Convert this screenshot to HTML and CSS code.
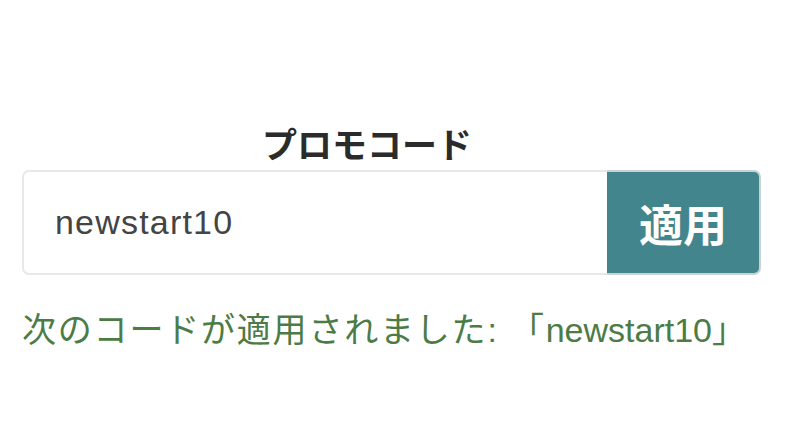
FILE: index.html
```html
<!DOCTYPE html>
<html lang="ja">
<head>
<meta charset="utf-8">
<link rel="stylesheet" href="styles.css">
</head>
<body>
<div class="promo">
  <div class="label">プロモコード</div>
  <div class="group">
    <div class="field">newstart10</div>
    <button class="apply">適用</button>
  </div>
  <div class="message"><span class="message-jp">次のコードが適用されました: 「</span>newstart10」</div>
</div>
</body>
</html>
```
FILE: styles.css
```css
html, body {
  margin: 0;
  padding: 0;
  background: #ffffff;
}
.promo {
  padding: 119px 29px 0 22px;
  font-family: "Liberation Sans", "Noto Sans CJK JP", sans-serif;
}
.label {
  font-family: "Noto Sans CJK JP", sans-serif;
  font-weight: 700;
  font-size: 35px;
  line-height: 48px;
  color: #2b2b2b;
  padding-left: 240px;
  margin-bottom: 3px;
}
.group {
  display: flex;
  height: 105px;
  box-sizing: border-box;
}
.field {
  flex: 1;
  border: 2px solid #e8e8e8;
  border-right: none;
  border-radius: 7px 0 0 7px;
  display: flex;
  align-items: center;
  padding-left: 31px;
  font-size: 34px;
  letter-spacing: 1.2px;
  color: #444444;
}
.apply {
  width: 154px;
  border: 2px solid #c7d2d5;
  border-left: none;
  border-radius: 0 7px 7px 0;
  background: #43858d;
  color: #ffffff;
  font-family: "Noto Sans CJK JP", sans-serif;
  font-weight: 700;
  font-size: 44px;
  padding: 0;
  margin: 0;
}
.message {
  margin-top: 30px;
  font-size: 34px;
  line-height: 50px;
  color: #4c7b46;
  font-family: "Liberation Sans", "Noto Sans CJK JP", sans-serif;
}
.message-jp {
  letter-spacing: 1.8px;
}
```
